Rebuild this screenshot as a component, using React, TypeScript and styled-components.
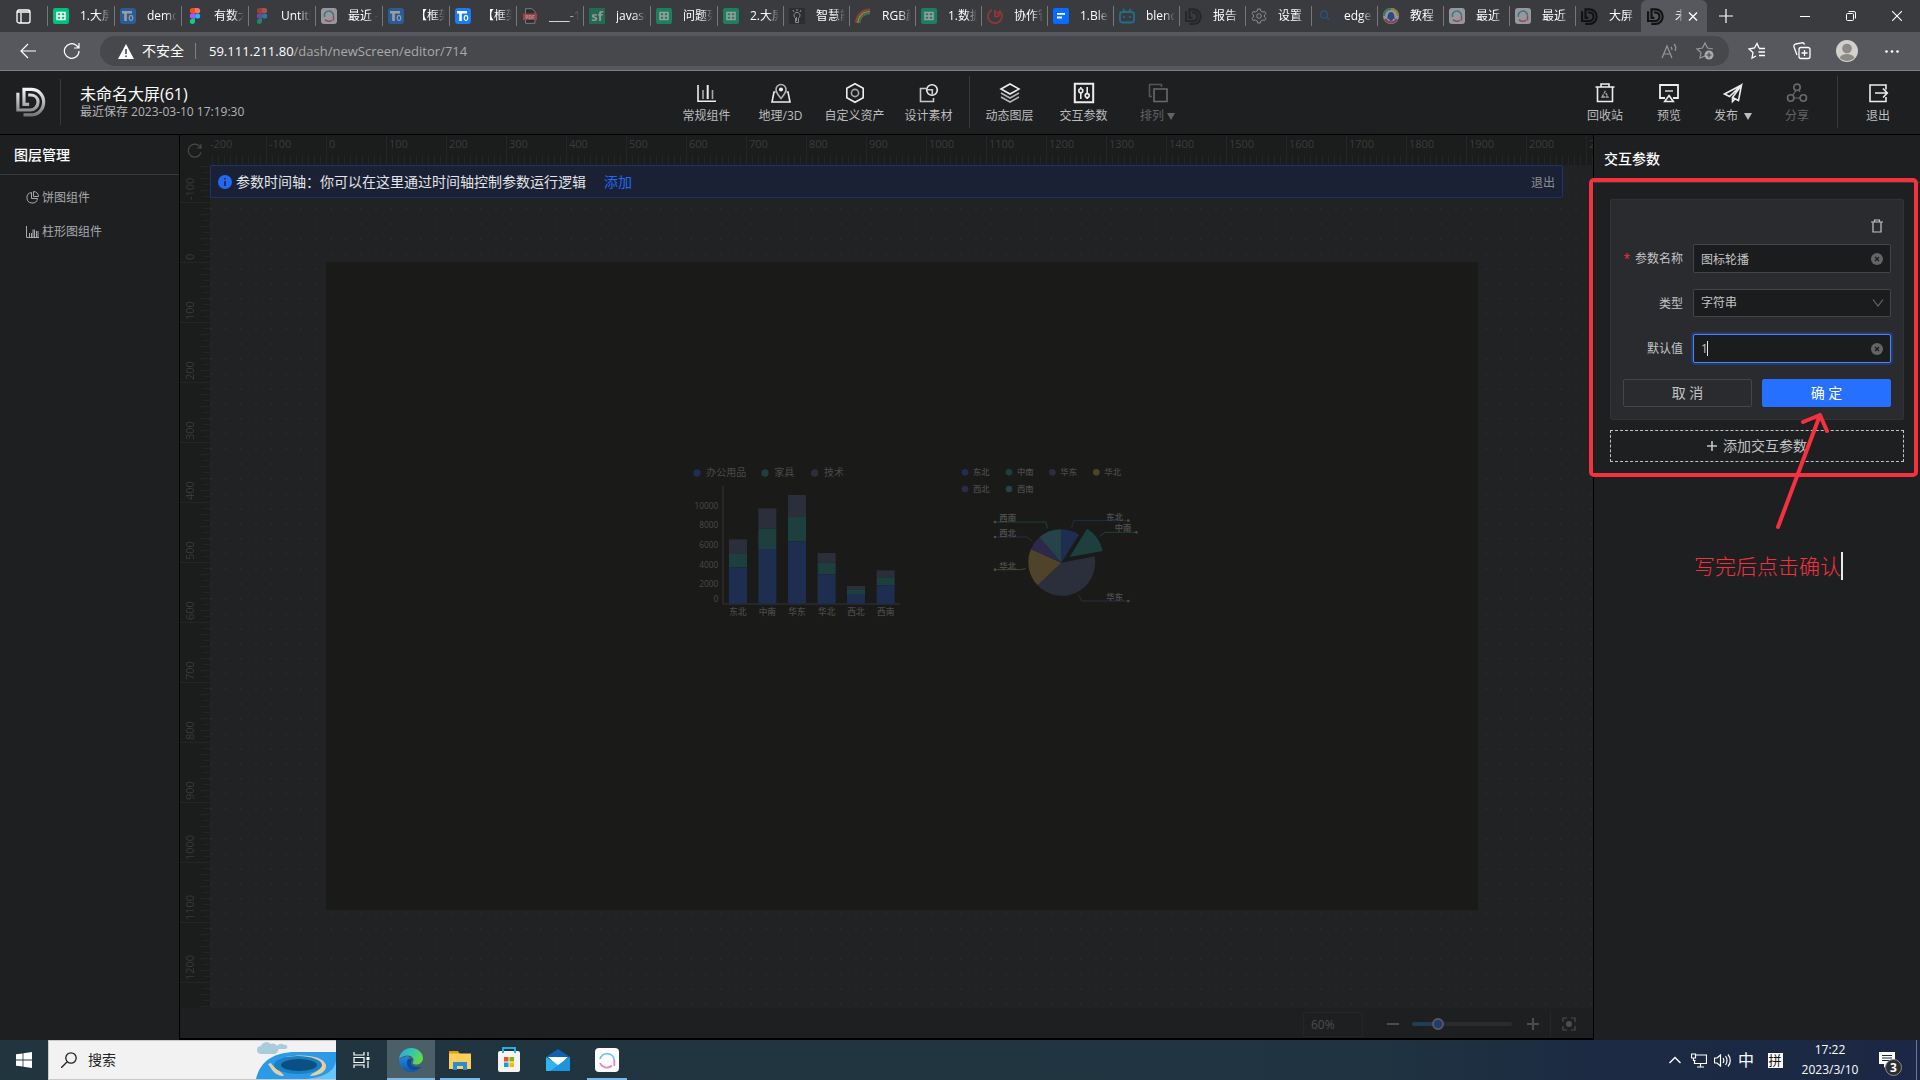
import React from "react";
import styled, { createGlobalStyle } from "styled-components";

const GlobalStyle = createGlobalStyle`
  *, *::before, *::after { box-sizing: border-box; }
  html, body { margin: 0; }
  body {
    background: #1e1f21;
    color: #fff;
    font-family: "Open Sans", "Noto Sans CJK SC", sans-serif;
    font-size: 12px;
    line-height: 18px;
  }
  button, input, select { font: inherit; color: inherit; margin: 0; padding: 0; border: 0; background: none; }
  button { cursor: pointer; white-space: nowrap; }
  a { text-decoration: none; }
  svg { display: block; flex: none; }
  h1, h2, p, ul { margin: 0; padding: 0; font-weight: 400; list-style: none; }
`;

const Page = styled.div`
  display: flex;
  flex-direction: column;
  min-height: 100vh;
  overflow: hidden;
`;

/* ---------- browser chrome ---------- */

const TabStrip = styled.div`
  display: flex;
  height: 32px;
  background: #3a3b3e;
`;
const TabMenu = styled.button`
  display: grid;
  place-items: center;
  width: 47px;
`;
const TabList = styled.div`
  display: flex;
  flex: 1;
  min-width: 0;
`;
const Tab = styled.div<{ $active?: boolean; $asleep?: boolean; $wide?: boolean }>`
  display: flex;
  align-items: center;
  gap: 11px;
  flex: 0 1 ${(p) => (p.$wide ? 67 : 66)}px;
  min-width: 0;
  padding: 0 4px 0 6px;
  background: ${(p) => (p.$active ? "#57585d" : "transparent")};
  border-radius: 6px 6px 0 0;
  position: relative;
  &::before {
    content: "";
    position: absolute;
    left: 0;
    top: 6px;
    width: 1px;
    height: 20px;
    background: ${(p) => (p.$active ? "transparent" : "#77787b")};
  }
  > svg { opacity: ${(p) => (p.$asleep ? 0.5 : 1)}; }
`;
const TabTitle = styled.span`
  flex: 1;
  min-width: 0;
  overflow: hidden;
  white-space: nowrap;
  mask-image: linear-gradient(90deg, #000 60%, transparent);
`;
const CloseTab = styled.button`
  margin-left: -8px;
`;
const WindowTools = styled.div`
  display: flex;
  justify-content: space-between;
  width: 212px;
`;
const WindowGroup = styled.div`
  display: flex;
`;
const ChromeButton = styled.button<{ $w?: number }>`
  display: grid;
  place-items: center;
  width: ${(p) => p.$w ?? 46}px;
`;
const AddressRow = styled.div`
  display: flex;
  align-items: center;
  height: 39px;
  padding: 0 5px 0 6px;
  background: #57585d;
  border-bottom: 1px solid #7d7e82;
`;
const AddressBox = styled.div`
  display: flex;
  align-items: center;
  flex: 1;
  height: 30px;
  margin: 0 6px;
  padding: 0 5px 0 18px;
  border-radius: 15px;
  background: #47484b;
  font-size: 14px;
  line-height: 20px;
`;
const Insecure = styled.span`
  margin: 0 11px 0 8px;
`;
const BarLine = styled.span`
  width: 1px;
  height: 16px;
  margin-right: 13px;
  background: #808184;
`;
const Url = styled.div`
  flex: 1;
  color: #a9aaac;
  font-size: 13px;
  outline: none;
  b { color: #fff; font-weight: 400; }
`;

/* ---------- editor header ---------- */

const Header = styled.header`
  display: flex;
  justify-content: space-between;
  height: 64px;
  background: #1e1f21;
  border-bottom: 1px solid #000;
`;
const Brand = styled.div`
  display: flex;
  align-items: center;
  min-width: 291px;
  padding: 0 0 2px 16px;
`;
const BrandText = styled.div`
  margin-left: 14px;
  padding: 5px 0 5px 19px;
  border-left: 1px solid #38393c;
`;
const Title = styled.h1`
  font-size: 16px;
  line-height: 20px;
`;
const Saved = styled.p`
  color: #b4b5b7;
  line-height: 16px;
`;
const Tools = styled.nav`
  display: flex;
`;
const RightTools = styled(Tools)`
  padding-right: 10px;
`;
const Tool = styled.button<{ $w: number; $dim?: boolean }>`
  display: flex;
  flex-direction: column;
  align-items: center;
  width: ${(p) => p.$w}px;
  padding-top: 10px;
  color: ${(p) => (p.$dim ? "#696a6c" : "#ededee")};
  span {
    display: flex;
    align-items: center;
    gap: 3px;
    line-height: 22px;
    white-space: pre;
    color: ${(p) => (p.$dim ? "#626365" : "#bcbdbf")};
  }
`;
const ToolLine = styled.i<{ $m: number }>`
  width: 1px;
  height: 52px;
  margin: 5px ${(p) => p.$m}px 0;
  background: #38393c;
`;

/* ---------- editor body ---------- */

const Body = styled.main`
  display: flex;
  flex: 1;
`;
const Layers = styled.aside`
  width: 180px;
  background: #1e1f21;
  border-right: 1px solid #000;
`;
const LayersTitle = styled.h2`
  height: 40px;
  padding-left: 14px;
  border-bottom: 1px solid #38393c;
  font-size: 14px;
  font-weight: 500;
  line-height: 40px;
`;
const LayerList = styled.ul`
  padding-top: 6px;
`;
const Layer = styled.li`
  display: flex;
  align-items: center;
  gap: 3px;
  height: 34px;
  padding-left: 26px;
  color: #a8a9ab;
  svg { margin-bottom: 2px; }
`;
const Center = styled.section`
  display: grid;
  grid-template: 30px 1fr 32px / 30px 1fr;
  flex: 1;
  min-width: 0;
  background: #1b1c1c;
`;
const Corner = styled.button`
  display: grid;
  place-items: center;
  color: #48494a;
`;
const TopRuler = styled.div`
  display: flex;
  min-width: 0;
  overflow: hidden;
  color: #3a3b3b;
  font-size: 11px;
  line-height: 16px;
  background:
    repeating-linear-gradient(90deg, transparent 0 56px, #242525 56px 57px, transparent 57px 60px),
    repeating-linear-gradient(90deg, transparent 0 2px, #232424 2px 3px, transparent 3px 6px) 0 20px / 100% 10px no-repeat;
`;
const TopMark = styled.span<{ $first: boolean }>`
  flex: none;
  width: ${(p) => (p.$first ? 56 : 60)}px;
  padding: 1px 0 0 ${(p) => (p.$first ? 0 : 3)}px;
`;
const SideRuler = styled.div`
  position: relative;
  min-height: 0;
  overflow: hidden;
  background:
    repeating-linear-gradient(180deg, transparent 0 37px, #242525 37px 38px, transparent 38px 60px),
    repeating-linear-gradient(180deg, transparent 0 1px, #232424 1px 2px, transparent 2px 12px) 20px 0 / 10px 100% no-repeat,
    repeating-linear-gradient(180deg, transparent 0 7px, #232424 7px 8px, transparent 8px 12px) 23px 0 / 7px 100% no-repeat;
`;
const SideMarks = styled.div`
  position: absolute;
  inset: 0;
  color: #3a3b3b;
  font-size: 11px;
  line-height: 20px;
`;
const SideMark = styled.span<{ $first: boolean }>`
  display: block;
  height: ${(p) => (p.$first ? 37 : 60)}px;
  padding-top: 2px;
  writing-mode: vertical-rl;
  width: 20px;
  transform: rotate(180deg);
`;
const Workspace = styled.div`
  min-width: 0;
  background-color: #212224;
  background-image: radial-gradient(circle at 8px 8px, #27282a 1px, transparent 1px);
  background-size: 15px 15px;
  background-position: 8px 6px;
`;
const Notice = styled.div`
  display: flex;
  align-items: center;
  height: 33px;
  margin-right: 30px;
  padding: 0 7px;
  background: #1a2134;
  border: 1px solid #1d3564;
  border-radius: 2px;
  font-size: 14px;
  color: #e4e5e8;
  p { margin: 0 18px 0 4px; }
`;
const NoticeLink = styled.button`
  color: #2468f2;
`;
const NoticeExit = styled.button`
  margin-left: auto;
  padding-top: 2px;
  font-size: 12px;
  color: #8a8d95;
`;
const Stage = styled.div`
  position: relative;
  aspect-ratio: 16 / 9;
  margin: 64px 115px 0 116px;
  background: #1a1a18;
`;
const ChartNode = styled.div<{ $x: number; $y: number }>`
  position: absolute;
  left: ${(p) => p.$x}px;
  top: ${(p) => p.$y}px;
`;
const ZoomBar = styled.div`
  grid-column: 1 / -1;
  display: flex;
  align-items: center;
  justify-content: flex-end;
  padding-top: 2px;
  background: #1e1f21;
  border-bottom: 2px solid #000;
  color: #4c4d4f;
`;
const ZoomValue = styled.input`
  width: 60px;
  height: 25px;
  margin-right: 13px;
  padding-left: 7px;
  border: 1px solid #252628;
  border-radius: 2px;
`;
const ZoomButton = styled.button`
  display: grid;
  place-items: center;
  width: 34px;
  height: 28px;
`;
const ZoomRange = styled.input`
  appearance: none;
  width: 100px;
  height: 4px;
  margin: 0 4px 0 2px;
  border-radius: 2px;
  background: linear-gradient(90deg, #1f4050, #1f3a63 26%, #2a2b2d 26%);
  &::-webkit-slider-thumb {
    appearance: none;
    width: 12px;
    height: 12px;
    border: 2px solid #58595c;
    border-radius: 50%;
    background: #213a70;
  }
`;
const FitButton = styled(ZoomButton)`
  width: 43px;
  padding-right: 6px;
  border-left: 1px solid #252628;
`;

/* ---------- parameter panel ---------- */

const Params = styled.aside`
  position: relative;
  width: 327px;
  background: #1e1f21;
  border-left: 1px solid #000;
`;
const ParamsTitle = styled.h2`
  height: 48px;
  padding-left: 10px;
  border-bottom: 1px solid #38393c;
  font-size: 14px;
  font-weight: 500;
  line-height: 48px;
`;
const ParamsBody = styled.div`
  display: flex;
  flex-direction: column;
  gap: 10px;
  padding: 16px;
`;
const Card = styled.form`
  display: flex;
  flex-direction: column;
  gap: 16px;
  padding: 12px;
  background: #2a2b2e;
  border: 1px solid #313235;
  border-radius: 2px;
`;
const CardTop = styled.div`
  display: flex;
  justify-content: flex-end;
  height: 28px;
  margin-bottom: -12px;
`;
const IconButton = styled.button`
  display: grid;
  place-items: center;
  width: 28px;
`;
const Row = styled.div`
  display: grid;
  grid-template-columns: 60px 1fr;
  column-gap: 10px;
  align-items: center;
  height: 29px;
`;
const RowLabel = styled.label`
  text-align: right;
  color: #c3c4c6;
  white-space: nowrap;
  i { color: #f5313f; font-style: normal; margin-right: 5px; }
`;
const Field = styled.div`
  position: relative;
  height: 29px;
  color: #c3c4c6;
  > svg { position: absolute; right: 7px; top: 8px; pointer-events: none; }
`;
const TextBox = styled.input<{ $focused?: boolean }>`
  width: 100%;
  height: 29px;
  padding: 0 28px 0 7px;
  background: #1b1c1e;
  border: 1px solid ${(p) => (p.$focused ? "#4a86f7" : "#444548")};
  border-radius: 2px;
  outline: none;
  box-shadow: ${(p) => (p.$focused ? "0 0 0 2px #24396a" : "none")};
`;
const Select = styled.select`
  appearance: none;
  width: 100%;
  height: 28px;
  padding: 0 28px 0 7px;
  background: #1b1c1e;
  border: 1px solid #444548;
  border-radius: 2px;
`;
const Clear = styled.button`
  position: absolute;
  right: 8px;
  top: 9px;
`;
const TypingCaret = styled.i<{ $h: number }>`
  display: inline-block;
  width: ${(p) => (p.$h > 20 ? 2 : 1)}px;
  height: ${(p) => p.$h}px;
  background: #e8e8e8;
`;
const FieldCaret = styled.span`
  position: absolute;
  left: 14px;
  top: 7px;
  line-height: 0;
`;
const Actions = styled.div`
  display: grid;
  grid-template-columns: 1fr 1fr;
  gap: 10px;
`;
const Action = styled.button<{ $primary?: boolean }>`
  height: 28px;
  border: 1px solid ${(p) => (p.$primary ? "#2670ff" : "#444548")};
  border-radius: 2px;
  background: ${(p) => (p.$primary ? "#2670ff" : "transparent")};
  color: ${(p) => (p.$primary ? "#fff" : "#c3c4c6")};
  font-size: 14px;
`;
const AddParam = styled.button`
  display: flex;
  align-items: center;
  justify-content: center;
  gap: 6px;
  height: 32px;
  border: 1px dashed #c3c4c6;
  color: #c3c4c6;
  font-size: 14px;
`;
const MarkBox = styled.div`
  position: absolute;
  left: -5px;
  right: 2px;
  top: 43px;
  height: 299px;
  border: 4px solid #f5313f;
  border-radius: 5px;
  pointer-events: none;
`;
const MarkArrow = styled.div`
  position: absolute;
  right: 86px;
  top: 275px;
  pointer-events: none;
`;
const MarkText = styled.p`
  position: absolute;
  right: 77px;
  top: 416px;
  display: flex;
  align-items: center;
  color: #f5313f;
  font-size: 21px;
  font-weight: 300;
  line-height: 30px;
  white-space: nowrap;
`;

/* ---------- taskbar ---------- */

const Taskbar = styled.footer`
  display: flex;
  justify-content: space-between;
  height: 40px;
  background: linear-gradient(90deg, #20353e, #1f3440 70%, #1c2a43 84%, #1b2744);
`;
const TaskGroup = styled.div`
  display: flex;
`;
const TaskButton = styled.button<{ $w?: number; $on?: boolean; $line?: boolean }>`
  display: grid;
  place-items: center;
  width: ${(p) => p.$w ?? 48}px;
  margin-right: ${(p) => (p.$w ? 0 : 1)}px;
  background-color: ${(p) => (p.$on ? "#4a5f68" : "transparent")};
  background-image: ${(p) => (p.$on || p.$line ? "linear-gradient(#76b9ed, #76b9ed)" : "none")};
  background-repeat: no-repeat;
  background-size: ${(p) => (p.$on ? "100%" : "40px")} 2px;
  background-position: center bottom;
`;
const Search = styled.label`
  display: flex;
  align-items: center;
  width: 288px;
  padding-left: 12px;
  background: #f2f2f2;
  border: 1px solid #c6c8ca;
  border-right: 0;
  input { flex: 1; min-width: 0; margin-left: 11px; font-size: 14px; color: #222; outline: none; }
  input::placeholder { color: #222; opacity: 1; }
`;
const Tray = styled.div`
  display: flex;
  align-items: center;
  padding-right: 3px;
`;
const TrayButton = styled.button<{ $w: number }>`
  display: grid;
  place-items: center;
  width: ${(p) => p.$w}px;
  height: 40px;
  font-size: 16px;
`;
const Ime = styled.span`
  display: grid;
  place-items: center;
  width: 15px;
  height: 15px;
  background: #fff;
  color: #111;
  font-size: 13px;
  line-height: 15px;
`;
const Clock = styled.button`
  display: block;
  width: 76px;
  margin-right: 2px;
  line-height: 20px;
`;
const Alerts = styled.button`
  position: relative;
  display: grid;
  place-items: center;
  width: 34px;
  height: 40px;
`;
const Badge = styled.span`
  position: absolute;
  left: 15px;
  top: 19px;
  width: 17px;
  height: 17px;
  border: 1px solid #8c8d90;
  border-radius: 50%;
  background: #2b2d33;
  font-weight: 700;
  line-height: 15px;
`;
const DesktopEdge = styled.i`
  width: 1px;
  height: 40px;
  margin-left: 12px;
  background: #6d788c;
`;

/* ---------- drawings ---------- */

const Brandmark = ({ size, dark }: { size: number; dark?: boolean }) => (
  <svg width={size} height={size} viewBox="0 0 32 32" fill="none" stroke={dark ? "#111214" : "url(#steel)"} strokeWidth={dark ? 4 : 3.4}>
    <defs>
      <linearGradient id="steel" x1="0" y1="0" x2="0" y2="32" gradientUnits="userSpaceOnUse">
        <stop offset="0" stopColor="#fff" />
        <stop offset="1" stopColor="#6f7072" />
      </linearGradient>
    </defs>
    <path d="M2 6v18.500H15c5 0 8.500-4 8.500-8.500s-3.500-7.500-8.500-7.500h-2" />
    <path d="M14 18.500H8.500V2.500H16c8 0 13.500 6 13.500 13.500S24 29.800 16 29.800H8" />
  </svg>
);

type FavKind = "sheet" | "to" | "figma" | "ring" | "pdf" | "sf" | "bulb" | "rainbow" | "swirl" | "doc" | "bili" | "dd" | "gear" | "find" | "bell";

const Favicon = ({ kind }: { kind: FavKind }) => {
  if (kind === "dd") return <Brandmark size={17} dark />;
  return (
    <svg width="16" height="16" viewBox="0 0 16 16" fill="none">
      {kind === "sheet" && (<><rect width="16" height="16" rx="2" fill="#00c27c" /><path d="M4 4.500h8v7H4zM8 4.500v7M4 8h8" stroke="#fff" strokeWidth="1.500" /></>)}
      {kind === "to" && (<><rect width="16" height="16" rx="3" fill="#1b7df2" /><path d="M2 4.300h10M5.500 4v9" stroke="#fff" strokeWidth="2.600" /><rect x="9.300" y="7.700" width="3.400" height="4.600" rx="1.500" stroke="#fff" strokeWidth="1.200" /></>)}
      {kind === "figma" && (<><path d="M8 0H5.500a2.600 2.600 0 000 5.300H8z" fill="#f24e1e" /><path d="M8 0h2.500a2.600 2.600 0 010 5.300H8z" fill="#ff7262" /><path d="M8 5.300H5.500a2.600 2.600 0 000 5.400H8z" fill="#a259ff" /><circle cx="10.600" cy="8" r="2.600" fill="#1abcfe" /><path d="M8 10.700H5.500A2.600 2.600 0 108 13.300z" fill="#0acf83" /></>)}
      {kind === "ring" && (<><rect width="16" height="16" rx="3" fill="#f4f4f4" /><path d="M3.500 9a4.600 4.600 0 119-1.500" stroke="#2cb0d0" strokeWidth="1.500" /><path d="M12.500 7.500v5M4 11.500A4.600 4.600 0 0011 12" stroke="#e85a88" strokeWidth="1.500" /></>)}
      {kind === "pdf" && (<><path d="M3.500.7h6.500l3 3v11.600H3.500z" fill="#222" stroke="#bbb" /><rect x="1" y="5.500" width="14" height="6.500" fill="#ff4a4a" /><text x="8" y="10.700" fontSize="5" fontWeight="700" fill="#fff" textAnchor="middle">PDF</text></>)}
      {kind === "sf" && (<><rect width="16" height="16" fill="#0b9a63" /><text x="8" y="12.500" fontSize="13" fontWeight="700" fill="#eee" textAnchor="middle">sf</text></>)}
      {kind === "bulb" && (<><rect width="16" height="16" fill="#222326" /><path d="M6.500 14.500V10a3 3 0 113 0v4.500zM8 1v2M4 2l1 2M12 2l-1 2M7.500 9v4" stroke="#ddd" /></>)}
      {kind === "rainbow" && (<><path d="M1 15C1 8 6 2 15 1.500" stroke="#e44" strokeWidth="1.800" /><path d="M3 15C3 9 7 4 15 3.500" stroke="#dd3" strokeWidth="1.500" /><path d="M4.800 15C5 10 8 6 15 5.200" stroke="#3b6" strokeWidth="1.500" /></>)}
      {kind === "swirl" && <path d="M5 1.800A7 7 0 1012 2.500M8 2v7M8 4.500h2a2 2 0 010 4H8" stroke="#d8362e" strokeWidth="2" />}
      {kind === "doc" && (<><rect width="16" height="16" rx="2" fill="#0a6cff" /><path d="M4 5.800h8M4 9.500h5" stroke="#fff" strokeWidth="1.800" /></>)}
      {kind === "bili" && (<><rect x="1" y="4" width="14" height="10.500" rx="2.500" stroke="#0a9fd8" strokeWidth="1.800" /><path d="M4 1l2.500 3M12 1L9.500 4M5 8v2M11 8v2" stroke="#0a9fd8" strokeWidth="1.600" /></>)}
      {kind === "gear" && (<><path d="M6.700 1h2.600l.5 2 1.800 1 2-.6 1.300 2.200-1.500 1.500v1.800l1.500 1.500-1.300 2.200-2-.6-1.800 1-.5 2H6.700l-.5-2-1.800-1-2 .6-1.300-2.200 1.500-1.500V7.100L1.100 5.600l1.300-2.200 2 .6 1.800-1z" stroke="#e0e0e0" /><circle cx="8" cy="8" r="2.300" stroke="#e0e0e0" /></>)}
      {kind === "find" && (<><circle cx="7" cy="6.500" r="3.600" stroke="#0f6ac0" strokeWidth="1.500" /><path d="M9.800 9.300L12.500 12" stroke="#0f6ac0" strokeWidth="1.500" /></>)}
      {kind === "bell" && (<><circle cx="8" cy="8" r="8" fill="#eee" /><path d="M1 8a7 7 0 017-7" stroke="#36b38a" strokeWidth="2" /><path d="M8 1a7 7 0 017 7" stroke="#e8c13c" strokeWidth="2" /><path d="M2 11a7 7 0 0012 0" stroke="#d83c64" strokeWidth="2" /><path d="M4 10.500c1-1 0-6.500 4-6.500s3 5.500 4 6.500l-2 .5a2 2 0 01-4 0z" fill="#2358c4" /></>)}
    </svg>
  );
};

const Glyph = ({ children, size = 24, w = 1.6 }: { children: React.ReactNode; size?: number; w?: number }) => (
  <svg width={size} height={size} viewBox={`0 0 ${size} ${size}`} fill="none" stroke="currentColor" strokeWidth={w}>{children}</svg>
);

type ToolInfo = { name: string; icon: React.ReactNode; dim?: boolean; drop?: boolean };

const tools1: ToolInfo[] = [
  { name: "常规组件", icon: <><path d="M3 4v16.200h18" /><path d="M8 9v9M17.500 9v9" stroke="#a8a9ab" /><path d="M12.700 4v14" strokeWidth="2" /></> },
  { name: "地理/3D", icon: <><path d="M6.500 11H5L3 21h18l-2-10h-1.500" /><path d="M12 17.500C9 14 7 11.500 7 8.500a5 5 0 0110 0c0 3-2 5.500-5 9z" stroke="#b4b5b7" /><circle cx="12" cy="8.500" r="1.300" fill="currentColor" /></> },
  { name: "自定义资产", icon: <><path d="M12 2.700l8.200 4.600v9.400L12 21.300l-8.200-4.600V7.300z" /><circle cx="12" cy="12" r="3.600" stroke="#a8a9ab" /></> },
  { name: "设计素材", icon: <><path d="M9 7.500H3.500v13h13V17" stroke="#c8c9cb" /><circle cx="15" cy="9" r="5.300" /><path d="M10 8.800h5.300v5" stroke="#c8c9cb" /></> },
];
const tools2: ToolInfo[] = [
  { name: "动态图层", icon: <><path d="M12 3l9 5-9 5-9-5z" /><path d="M3 12l9 5 9-5" stroke="#b4b5b7" /><path d="M3 16l9 5 9-5" stroke="#b4b5b7" /></> },
  { name: "交互参数", icon: <><path d="M2.800 2.800h18.400v18.400H2.800z" strokeWidth="2" /><path d="M8.800 6v1.500M8.800 12v6M15.200 6v6.500M15.200 17v1" /><circle cx="8.800" cy="9.700" r="2" /><circle cx="15.200" cy="14.600" r="2" /></> },
  { name: "排列", dim: true, drop: true, icon: <><path d="M6 15.500H3.500v-12h12V6" stroke="#545557" /><path d="M8 8h13v12.500H8z" /></> },
];
const tools3: ToolInfo[] = [
  { name: "回收站", icon: <><path d="M2.500 6h19M4.500 6v14.500h15V6M8 6V3h8v3" /><path d="M9 16l3-5.500 3 5.500zM9 16h6" strokeWidth="1.300" stroke="#a8a9ab" strokeDasharray="3 1" /></> },
  { name: "预览", icon: <><path d="M8 17H3V4h18v13h-5" strokeWidth="1.800" /><path d="M8 10h8" strokeWidth="1.800" stroke="#b4b5b7" /><path d="M12 14.500l4.300 6H7.700z" /></> },
  { name: "发布 ", drop: true, icon: <path d="M20.500 4L3.500 13l5 2.500L20.500 4l-3 15.500-6-3L20.500 4M11.500 16v4.500l3-3" /> },
  { name: "分享", dim: true, icon: <><circle cx="12" cy="6.300" r="3.200" /><circle cx="5.700" cy="17" r="3.200" /><circle cx="18.300" cy="17" r="3.200" /><path d="M11 9.500l-3.500 5M9 17h6M14 9.500l1 1.500" strokeWidth="1.200" /></> },
];

const ToolItem = ({ tool, width }: { tool: ToolInfo; width: number }) => (
  <Tool $w={width} $dim={tool.dim}>
    <Glyph>{tool.icon}</Glyph>
    <span>
      {tool.name}
      {tool.drop && <svg width="8" height="7" viewBox="0 0 8 7"><path d="M0 0h8L4 7z" fill="currentColor" /></svg>}
    </span>
  </Tool>
);

const ClearIcon = () => (
  <svg width="12" height="12" viewBox="0 0 12 12"><circle cx="6" cy="6" r="6" fill="#636466" /><path d="M4 4l4 4M8 4L4 8" stroke="#1b1c1e" strokeWidth="1.200" /></svg>
);

/* ---------- charts ---------- */

const blue = "#1e2e50", green = "#1d403e", slate = "#2b2f3b", gold = "#4f4429", violet = "#2e294a", teal = "#26434a";
const bars = [
  { name: "东北", x: 177, y: [268, 310, 352] },
  { name: "中南", x: 265, y: [175, 236, 297] },
  { name: "华东", x: 354, y: [135, 199, 274] },
  { name: "华北", x: 443, y: [309, 338, 373] },
  { name: "西北", x: 531, y: [408, 418, 432] },
  { name: "西南", x: 620, y: [361, 382, 406] },
];
const yAxis: [string, number][] = [["10000", 168], ["8000", 225], ["6000", 285], ["4000", 345], ["2000", 402], ["0", 447]];

const BarChart = () => (
  <svg width="250" height="180" viewBox="0 0 750 540" fill="#4a4b4b">
    {[["办公用品", 81, blue], ["家具", 285, green], ["技术", 434, slate]].map(([n, x, c]) => (
      <g key={n as string}>
        <circle cx={x} cy="69" r="11" fill={c as string} />
        <text x={(x as number) + 28} y="79" fontSize="30">{n}</text>
      </g>
    ))}
    <path d="M159 108V462H691" stroke="#333434" strokeWidth="3" fill="none" />
    {yAxis.map(([n, y]) => <text key={n} x="145" y={y + 9} fontSize="25" textAnchor="end">{n}</text>)}
    {bars.map((b) => (
      <g key={b.name}>
        <rect x={b.x} y={b.y[0]} width="54" height={b.y[1] - b.y[0]} fill={slate} />
        <rect x={b.x} y={b.y[1]} width="54" height={b.y[2] - b.y[1]} fill={green} />
        <rect x={b.x} y={b.y[2]} width="54" height={461 - b.y[2]} fill={blue} />
        <text x={b.x + 27} y="494" fontSize="26" fontWeight="500" textAnchor="middle">{b.name}</text>
      </g>
    ))}
  </svg>
);

const pieLegend: [string, number, number, string][] = [
  ["东北", 36, 67, blue], ["中南", 168, 67, green], ["华东", 298, 67, "#2b2d40"], ["华北", 430, 67, gold], ["西北", 36, 117, violet], ["西南", 168, 117, teal],
];
const pieTags: [string, number, number, string, string, number, number][] = [
  ["西南", 139, 213, "M126 216H278L284 236", green, 126, 216],
  ["西北", 139, 258, "M126 261H222L238 273", violet, 126, 261],
  ["华北", 139, 357, "M126 359H200L218 356", gold, 126, 359],
  ["东北", 460, 210, "M526 212H362L356 234", blue, 526, 212],
  ["中南", 485, 244, "M550 247H456L440 259", green, 550, 247],
  ["华东", 460, 450, "M526 453H386L377 435", slate, 526, 453],
];
const slices: [string, string][] = [
  ["M325 338V238A100 100 0 01378 254Z", blue],
  ["M350 321L402 236A100 100 0 01449 303Z", green],
  ["M325 338L425 319A100 100 0 01254 406Z", slate],
  ["M325 338L254 406A100 100 0 01234 297Z", gold],
  ["M325 338L234 297A100 100 0 01259 262Z", violet],
  ["M325 338L259 262A100 100 0 01325 238Z", teal],
];

const PieChart = () => (
  <svg width="200" height="180" viewBox="0 0 600 540" fill="#4a4b4b">
    {pieLegend.map(([n, x, y, c]) => (
      <g key={n}>
        <circle cx={x} cy={y} r="10" fill={c} />
        <text x={x + 24} y={y + 9} fontSize="25" fontWeight="500">{n}</text>
      </g>
    ))}
    {slices.map(([d, c]) => <path key={d} d={d} fill={c} />)}
    {pieTags.map(([n, x, y, d, c, cx, cy]) => (
      <g key={n}>
        <path d={d} stroke={c} strokeWidth="3" fill="none" />
        <circle cx={cx} cy={cy} r="4" />
        <text x={x} y={y} fontSize="25" fontWeight="700">{n}</text>
      </g>
    ))}
  </svg>
);

const tabs: [string, FavKind, boolean][] = [
  ["1.大屏幕", "sheet", false], ["demo页", "to", true], ["有数大屏", "figma", false], ["Untitled", "figma", true], ["最近 - 网", "ring", true],
  ["【框架】", "to", true], ["【框架】", "to", false], ["____-1", "pdf", true], ["javascript", "sf", true], ["问题列表", "sheet", true],
  ["2.大屏幕", "sheet", true], ["智慧能源", "bulb", true], ["RGB颜色", "rainbow", true], ["1.数据", "sheet", true], ["协作管理", "swirl", true],
  ["1.Blender", "doc", false], ["blender", "bili", true], ["报告 - 有", "dd", true], ["设置", "gear", true], ["edge浏", "find", true],
  ["教程", "bell", true], ["最近 - 网", "ring", true], ["最近 - 网", "ring", true], ["大屏 - 有", "dd", false],
];

const topMarks = Array.from({ length: 24 }, (_, i) => (i - 2) * 100);
const sideMarks = Array.from({ length: 14 }, (_, i) => (i - 1) * 100);

export default function App() {
  return (
    <Page lang="zh-CN">
      <GlobalStyle />
      <TabStrip>
        <TabMenu aria-label="标签页操作">
          <svg width="15" height="15" viewBox="0 0 15 15" fill="none" stroke="#fff" strokeWidth="1.300"><rect x="1" y="1" width="13" height="13" rx="2" /><path d="M1 3h13M5 4v10" /></svg>
        </TabMenu>
        <TabList role="tablist">
          {tabs.map(([title, kind, asleep], i) => (
            <Tab key={i} role="tab" $asleep={asleep} $wide={i < 10}><Favicon kind={kind} /><TabTitle>{title}</TabTitle></Tab>
          ))}
          <Tab role="tab" aria-selected $active>
            <Favicon kind="dd" />
            <TabTitle>未命名</TabTitle>
            <CloseTab aria-label="关闭标签页"><svg width="18" height="9" viewBox="0 0 18 9" stroke="#fff" strokeWidth="1.300"><path d="M4 .5l8 8M12 .5l-8 8" /></svg></CloseTab>
          </Tab>
        </TabList>
        <WindowTools>
          <ChromeButton $w={36} aria-label="新建标签页"><Glyph size={14} w={1.2}><path d="M7 0v14M0 7h14" /></Glyph></ChromeButton>
          <WindowGroup>
            <ChromeButton aria-label="最小化"><Glyph size={10} w={1}><path d="M0 5.500h10" /></Glyph></ChromeButton>
            <ChromeButton aria-label="还原"><Glyph size={10} w={1}><rect x=".5" y="2.500" width="7" height="7" rx="1" /><path d="M2.500.5H8A1.500 1.500 0 019.500 2v5.500" /></Glyph></ChromeButton>
            <ChromeButton aria-label="关闭"><Glyph size={10} w={1.1}><path d="M0 0l10 10M10 0L0 10" /></Glyph></ChromeButton>
          </WindowGroup>
        </WindowTools>
      </TabStrip>

      <AddressRow>
        <ChromeButton $w={44} aria-label="后退"><Glyph size={16} w={1.2}><path d="M16 8H1M8 1L1 8l7 7" /></Glyph></ChromeButton>
        <ChromeButton $w={44} aria-label="刷新"><Glyph size={18} w={1.2}><path d="M16 9a7.300 7.300 0 11-2.500-5.500L16 6M16 1v5h-5" /></Glyph></ChromeButton>
        <AddressBox>
          <svg width="16" height="15" viewBox="0 0 16 15"><path d="M8 0l8 15H0z" fill="#fff" /><path d="M8 5v5M8 11.500v1.500" stroke="#47484b" strokeWidth="1.600" /></svg>
          <Insecure>不安全</Insecure>
          <BarLine />
          <Url role="textbox" aria-label="地址" contentEditable suppressContentEditableWarning><b>59.111.211.80</b>/dash/newScreen/editor/714</Url>
          <ChromeButton $w={34} aria-label="朗读"><svg width="17" height="17" viewBox="0 0 17 17" fill="none" stroke="#97989b" strokeWidth="1.200"><path d="M1 15L6 3l5 12M3 11h6M10 4c1 1 1 2 1 3M13 1c2 2 2 5 1 7" /></svg></ChromeButton>
          <ChromeButton $w={38} aria-label="收藏"><svg width="18" height="18" viewBox="0 0 18 18" fill="none" stroke="#97989b" strokeWidth="1.200"><path d="M9 14l-5 2 1-5.500L1 7l5.500-1L9 1l2.500 5L17 7" /><circle cx="13" cy="13" r="4.500" fill="#a9aaac" stroke="none" /><path d="M13 10.500v5M10.500 13h5" stroke="#47484b" /></svg></ChromeButton>
        </AddressBox>
        <ChromeButton $w={44} aria-label="收藏夹"><Glyph size={18} w={1.3}><path d="M11 6L9 1.500 6.500 6 1 7l4 3.500L4 16l4-2M11 6.500h6M10.500 10h6.500M11 13.500h6" /></Glyph></ChromeButton>
        <ChromeButton $w={45} aria-label="集锦"><Glyph size={18} w={1.3}><rect x="6" y="5.500" width="11" height="11" rx="2" /><path d="M11.500 8v6M8.500 11h6M4 13L1 5c-.4-1.500.3-2.500 1.500-3L9 .8c1.300-.2 2 .4 2.500 1.700" /></Glyph></ChromeButton>
        <ChromeButton $w={45} aria-label="用户"><svg width="22" height="22" viewBox="0 0 22 22"><circle cx="11" cy="11" r="11" fill="#d2d0cd" /><circle cx="11" cy="8.500" r="4.800" fill="#8d8985" /><path d="M3.500 18c1.500-3 4-4 7.500-4s6 1 7.500 4A11 11 0 013.500 18z" fill="#8d8985" /></svg></ChromeButton>
        <ChromeButton aria-label="更多"><svg width="14" height="3" viewBox="0 0 14 3" fill="#fff"><circle cx="1.500" cy="1.500" r="1.300" /><circle cx="7" cy="1.500" r="1.300" /><circle cx="12.500" cy="1.500" r="1.300" /></svg></ChromeButton>
      </AddressRow>

      <Header>
        <Brand>
          <Brandmark size={30} />
          <BrandText>
            <Title>未命名大屏(61)</Title>
            <Saved>最近保存 2023-03-10 17:19:30</Saved>
          </BrandText>
        </Brand>
        <Tools>
          {tools1.map((t) => <ToolItem key={t.name} tool={t} width={74} />)}
          <ToolLine $m={3} />
          {tools2.map((t) => <ToolItem key={t.name} tool={t} width={74} />)}
        </Tools>
        <RightTools>
          {tools3.map((t) => <ToolItem key={t.name} tool={t} width={64} />)}
          <ToolLine $m={8} />
          <Tool $w={64}><Glyph><path d="M20 8.500V4H4v16.500h16V16" /><path d="M9 12h12M17 7.500l4.300 4.500-4.300 4.500" /></Glyph><span>退出</span></Tool>
        </RightTools>
      </Header>

      <Body>
        <Layers>
          <LayersTitle>图层管理</LayersTitle>
          <LayerList>
            <Layer>
              <Glyph size={13} w={1}><path d="M5.500 1.500a5.300 5.300 0 106 6h-6z" /><path d="M7.500.5a5 5 0 015 5h-5z" /></Glyph>饼图组件
            </Layer>
            <Layer>
              <Glyph size={13} w={1}><path d="M.5 1v11.500H13M3.500 12V8M5.500 12V8M7 12V4.500M8.500 12V4.500M10.500 12V6M12 12V6" /></Glyph>柱形图组件
            </Layer>
          </LayerList>
        </Layers>

        <Center>
          <Corner aria-label="重置"><Glyph size={16} w={1.2}><path d="M14 10.500a6.500 6.500 0 11-.5-5M14 2v4h-4" /></Glyph></Corner>
          <TopRuler>{topMarks.map((n, i) => <TopMark key={n} $first={i === 0}>{n}</TopMark>)}</TopRuler>
          <SideRuler><SideMarks>{sideMarks.map((n, i) => <SideMark key={n} $first={i === 0}>{n}</SideMark>)}</SideMarks></SideRuler>
          <Workspace>
            <Notice>
              <svg width="14" height="14" viewBox="0 0 14 14"><circle cx="7" cy="7" r="7" fill="#2468f2" /><path d="M7 3v1.500M7 6v5" stroke="#1a2134" strokeWidth="1.500" /></svg>
              <p>参数时间轴：你可以在这里通过时间轴控制参数运行逻辑</p>
              <NoticeLink>添加</NoticeLink>
              <NoticeExit>退出</NoticeExit>
            </Notice>
            <Stage>
              <ChartNode $x={344} $y={188}><BarChart /></ChartNode>
              <ChartNode $x={627} $y={188}><PieChart /></ChartNode>
            </Stage>
          </Workspace>
          <ZoomBar>
            <ZoomValue aria-label="缩放比例" defaultValue="60%" />
            <ZoomButton aria-label="缩小"><Glyph size={12} w={2}><path d="M0 6h12" /></Glyph></ZoomButton>
            <ZoomRange type="range" aria-label="缩放" min={0} max={100} defaultValue={23} />
            <ZoomButton aria-label="放大"><Glyph size={12} w={2}><path d="M0 6h12M6 0v12" /></Glyph></ZoomButton>
            <FitButton aria-label="适应屏幕"><Glyph size={14} w={1.2}><path d="M1 5V1h4M9 1h4v4M13 9v4H9M5 13H1V9" /><circle cx="7" cy="7" r="3" fill="currentColor" stroke="none" /></Glyph></FitButton>
          </ZoomBar>
        </Center>

        <Params>
          <ParamsTitle>交互参数</ParamsTitle>
          <ParamsBody>
            <Card>
              <CardTop>
                <IconButton type="button" aria-label="删除"><svg width="12" height="14" viewBox="0 0 12 14" fill="none" stroke="#c3c4c6" strokeWidth="1.200"><path d="M0 3h12M2 3v10h8V3M3.500 3V1h5v2" /></svg></IconButton>
              </CardTop>
              <Row>
                <RowLabel htmlFor="pname"><i>*</i>参数名称</RowLabel>
                <Field><TextBox id="pname" defaultValue="图标轮播" /><Clear type="button" aria-label="清空"><ClearIcon /></Clear></Field>
              </Row>
              <Row>
                <RowLabel htmlFor="ptype">类型</RowLabel>
                <Field>
                  <Select id="ptype"><option>字符串</option></Select>
                  <svg width="12" height="12" viewBox="0 0 12 12" fill="none" stroke="#66676a" strokeWidth="1.200"><path d="M1 2.500l5 6.500 5-6.500" /></svg>
                </Field>
              </Row>
              <Row>
                <RowLabel htmlFor="pvalue">默认值</RowLabel>
                <Field><TextBox id="pvalue" defaultValue="1" $focused /><FieldCaret><TypingCaret $h={15} /></FieldCaret><Clear type="button" aria-label="清空"><ClearIcon /></Clear></Field>
              </Row>
              <Actions>
                <Action type="button">取 消</Action>
                <Action type="button" $primary>确 定</Action>
              </Actions>
            </Card>
            <AddParam><Glyph size={10} w={1.6}><path d="M5 0v10M0 5h10" /></Glyph>添加交互参数</AddParam>
          </ParamsBody>
          <MarkBox />
          <MarkArrow>
            <svg width="34" height="120" viewBox="0 0 34 120" fill="none" stroke="#f5313f" strokeWidth="4" strokeLinecap="round" overflow="visible"><path d="M-22 117L20 5M3 12L20 5L27 21" strokeLinejoin="round" /></svg>
          </MarkArrow>
          <MarkText>写完后点击确认<TypingCaret $h={28} /></MarkText>
        </Params>
      </Body>

      <Taskbar>
        <TaskGroup>
          <TaskButton $w={48} aria-label="开始"><svg width="16" height="16" viewBox="0 0 16 16" fill="#fff"><path d="M0 2.300l6.600-.9v6.200H0zM7.400 1.300L16 0v7.600H7.400zM0 8.400h6.600v6.200L0 13.700zM7.400 8.400H16V16l-8.600-1.200z" /></svg></TaskButton>
          <Search>
            <svg width="16" height="16" viewBox="0 0 16 16" fill="none" stroke="#222" strokeWidth="1.300"><circle cx="10" cy="6" r="5.200" /><path d="M6 10l-6 6" /></svg>
            <input placeholder="搜索" aria-label="搜索" />
            <svg width="80" height="38" viewBox="0 0 80 38">
              <g fill="#a9cbdb"><path d="M5 13a4 4 0 010-8 6 6 0 0110-2 5 5 0 014 10z" /><path d="M22 8a2.500 2.500 0 010-4 4 4 0 016 0 2 2 0 012 4z" /></g>
              <path d="M0 38C4 20 18 11 40 11h40v27z" fill="#2b9ae8" />
              <path d="M50 38c20-2 28-8 30-18v18z" fill="#67c5fa" />
              <path d="M12 23c4 5 6 12 16 12-2-5-10-7-13-13zM30 16c20-4 38 0 40 8 1 7-8 11-16 11 2-4 10-4 10-10 0-5-14-8-34-6z" fill="#e8cfa0" />
              <ellipse cx="42" cy="24" rx="24" ry="9" fill="#1b80c0" />
              <ellipse cx="43" cy="24" rx="18" ry="6" fill="#0b4f84" />
            </svg>
          </Search>
          <TaskButton $w={51} aria-label="任务视图"><svg width="18" height="16" viewBox="0 0 18 16" fill="none" stroke="#fff" strokeWidth="1.200"><path d="M1 0v3h10V0M1 16v-3h10v3M1 5.500h10v5H1zM15 0v4M15 9v7" /><path d="M13.500 5h3v3h-3z" fill="#fff" stroke="none" /></svg></TaskButton>
          <TaskButton $on aria-label="Edge">
            <svg width="24" height="24" viewBox="0 0 24 24">
              <defs>
                <linearGradient id="edgeTop" x1="0" y1="0" x2="1" y2=".4"><stop offset="0" stopColor="#2aa5e8" /><stop offset=".6" stopColor="#38c8a8" /><stop offset="1" stopColor="#63d84c" /></linearGradient>
                <linearGradient id="edgeLow" x1="0" y1="0" x2="0" y2="1"><stop offset="0" stopColor="#1b8fe0" /><stop offset="1" stopColor="#1455a8" /></linearGradient>
              </defs>
              <path d="M0 11C0 18 5 24 12 24c4 0 8-2 10-5.500-2 1-5 1-7 0L9 8z" fill="url(#edgeLow)" />
              <path d="M0 11C1 4 6 0 12 0c7 0 12 5 12 10 0 4-3 6.500-6.500 6.500-3 0-4.500-1.300-3.500-2.500 2-3-1-6.500-5-6.500-4 0-8 2-9 3.500z" fill="url(#edgeTop)" />
              <path d="M9 11c-3 5 1 11 6 11 3 0 5.500-1.500 7-3.500-4 1.500-10 .5-10-4 0-2 1-2 1-3.500z" fill="#0f4a94" />
            </svg>
          </TaskButton>
          <TaskButton $line aria-label="文件资源管理器"><svg width="22" height="19" viewBox="0 0 22 19"><path d="M0 0h9l2 3H0z" fill="#e0a010" /><path d="M0 2.500h22V18H0z" fill="#fccf5c" /><path d="M4 11h14v8h-4v-4H8v4H4z" fill="#2a8cd8" /></svg></TaskButton>
          <TaskButton aria-label="应用商店"><svg width="24" height="26" viewBox="0 0 24 26"><path d="M6 6V1h12v5" fill="none" stroke="#22b0e8" strokeWidth="2" /><rect x="1" y="4" width="22" height="21" rx="2" fill="#f4f4f4" /><path d="M6 4v2M18 4v2" stroke="#22b0e8" strokeWidth="2" /><path d="M7 10h4.500v4.500H7z" fill="#f25022" /><path d="M12.500 10H17v4.500h-4.500z" fill="#7fba00" /><path d="M7 15.500h4.500V20H7z" fill="#00a4ef" /><path d="M12.500 15.500H17V20h-4.500z" fill="#ffb900" /></svg></TaskButton>
          <TaskButton aria-label="邮件"><svg width="24" height="22" viewBox="0 0 24 22"><path d="M0 8l12-8 12 8v14H0z" fill="#0f62b0" /><path d="M2 8h20l-10 9z" fill="#fff" /><path d="M0 8l12 8L24 8v14H0z" fill="#2fb4f0" /><path d="M24 8v14H4z" fill="#1c94e0" /></svg></TaskButton>
          <TaskButton $line aria-label="网易"><svg width="24" height="24" viewBox="0 0 24 24" fill="none"><rect width="24" height="24" rx="4" fill="#fff" /><path d="M5 11a7.300 7.300 0 0114.300 1" stroke="#6ac4ea" strokeWidth="1.800" /><path d="M19.300 12v6M5 15a7.500 7.500 0 0012 2.500" stroke="#f080b4" strokeWidth="1.800" /></svg></TaskButton>
        </TaskGroup>
        <Tray>
          <TrayButton $w={24} aria-label="显示隐藏的图标"><Glyph size={12} w={1.4}><path d="M.5 9L6 3.500 11.500 9" /></Glyph></TrayButton>
          <TrayButton $w={24} aria-label="网络"><Glyph size={16} w={1.2}><path d="M5 3h10.500v8.500h-12V8M9.500 11.500V15M6 15h7M.5 2h4v4h-4zM2.500 6v2.500h2" /></Glyph></TrayButton>
          <TrayButton $w={23} aria-label="音量"><Glyph size={17} w={1.2}><path d="M.5 6h2.500l3.500-3v11L3 11H.5zM9 6c1 1.500 1 3.500 0 5M11.500 4c2 2.500 2 6.500 0 9M14 2.500c3 3.500 3 8.500 0 12" /></Glyph></TrayButton>
          <TrayButton $w={24}>中</TrayButton>
          <TrayButton $w={34}><Ime>拼</Ime></TrayButton>
          <Clock>17:22<br />2023/3/10</Clock>
          <Alerts aria-label="通知">
            <svg width="16" height="16" viewBox="0 0 16 16"><path d="M0 0h16v12H8l-3 4v-4H0z" fill="#fff" /><path d="M3 3.500h10M3 6h10M3 8.500h10" stroke="#1b2744" /></svg>
            <Badge>3</Badge>
          </Alerts>
          <DesktopEdge />
        </Tray>
      </Taskbar>
    </Page>
  );
}
